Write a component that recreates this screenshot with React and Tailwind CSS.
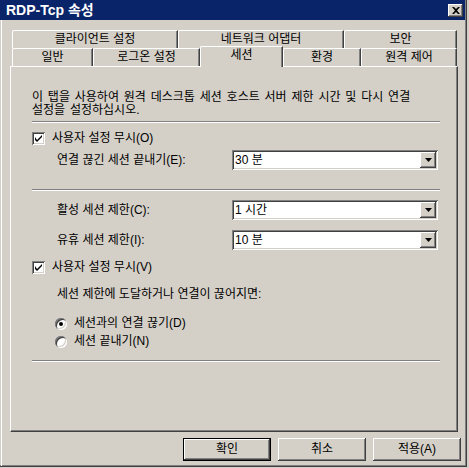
import React from "react";

const raised =
  "shadow-[inset_-1px_-1px_#404040,inset_1px_1px_#ffffff,inset_-2px_-2px_#808080]";
const sunken =
  "shadow-[inset_1px_1px_#808080,inset_-1px_-1px_#ffffff,inset_2px_2px_#404040,inset_-2px_-2px_#d4d0c8]";

function Tab({ label, width, selected }) {
  return (
    <div
      style={{ width }}
      className={`flex items-center justify-center border-t border-l border-white rounded-tl-[2px] shadow-[inset_-1px_0_#808080] border-r border-r-[#404040] bg-[#d4d0c8] ${
        selected ? "h-[21px] -mb-[1px] relative z-10 pb-[3px]" : "h-[18px]"
      }`}
    >
      <span className="leading-[13px] text-[12px]">{label}</span>
    </div>
  );
}

function Separator({ className = "" }) {
  return (
    <div className={`w-[408px] h-[2px] border-t border-[#808080] border-b border-b-white ${className}`} />
  );
}

function Combo({ value, className = "" }) {
  return (
    <div className={`w-[206px] h-[20px] bg-white flex items-center p-[2px] ${sunken} ${className}`}>
      <span className="flex-1 pl-[1px] leading-[13px] text-[12px]">{value}</span>
      <div className={`w-[16px] h-[16px] bg-[#d4d0c8] flex items-center justify-center ${raised}`}>
        <svg width="7" height="4" viewBox="0 0 7 4">
          <path d="M0 0H7L3.5 4Z" fill="#000" />
        </svg>
      </div>
    </div>
  );
}

function Checkbox({ label, className = "" }) {
  return (
    <div className={`flex items-center h-[13px] ${className}`}>
      <div className={`w-[13px] h-[13px] bg-white flex items-center justify-center ${sunken}`}>
        <svg width="7" height="7" viewBox="0 0 7 7">
          <path d="M0 2v3l2 2 5-5V0L2 5Z" fill="#000" />
        </svg>
      </div>
      <span className="ml-[7px] leading-[13px] text-[12px]">{label}</span>
    </div>
  );
}

function Radio({ label, checked, className = "" }) {
  return (
    <div className={`flex items-center h-[13px] ${className}`}>
      <div className={`w-[12px] h-[12px] rounded-full bg-white flex items-center justify-center ${sunken}`}>
        {checked && <div className="w-[4px] h-[4px] rounded-full bg-black" />}
      </div>
      <span className="ml-[7px] leading-[13px] text-[12px]">{label}</span>
    </div>
  );
}

function Button({ label, isDefault }) {
  return (
    <button
      className={`w-[88px] h-[23px] bg-[#d4d0c8] flex items-center justify-center text-[12px] leading-[13px] ${
        isDefault
          ? "border border-black shadow-[inset_-1px_-1px_#404040,inset_1px_1px_#ffffff,inset_-2px_-2px_#808080]"
          : raised
      }`}
    >
      {label}
    </button>
  );
}

export default function App() {
  return (
    <div className="w-[469px] h-[468px] bg-[#d4d0c8] overflow-hidden text-black font-['Liberation_Sans','Noto_Sans_CJK_KR',sans-serif]">
      <div className="w-[467px] h-[467px] flex flex-col border-r border-b border-[#404040] shadow-[inset_-1px_-1px_#808080]">
        {/* Title bar */}
        <div className="h-[20px] w-[465px] shrink-0 bg-[#0a246a] flex items-center justify-between pl-[6px] pr-[2px]">
          <span className="text-white font-bold text-[14px] leading-[15px]">RDP-Tcp 속성</span>
          <div className={`w-[15px] h-[13px] bg-[#d4d0c8] flex items-center justify-center ${raised}`}>
            <svg width="8" height="7" viewBox="0 0 8 7">
              <path d="M0 0h2l2 2 2-2h2L5 3.5 8 7H6L4 5 2 7H0l3-3.5Z" fill="#000" />
            </svg>
          </div>
        </div>

        <div className="flex-1 flex flex-col ml-[1px] border-l border-white">
          {/* Tabs */}
          <div className="mt-[10px] ml-[10px] flex">
            <Tab label="클라이언트 설정" width={166} />
            <Tab label="네트워크 어댑터" width={166} />
            <Tab label="보안" width={113} />
          </div>
          <div className="ml-[10px] flex items-end h-[18px]">
            <Tab label="일반" width={81} />
            <Tab label="로그온 설정" width={107} />
            <Tab label="세션" width={83} selected />
            <Tab label="환경" width={78} />
            <Tab label="원격 제어" width={96} />
          </div>

          {/* Panel */}
          <div className="ml-[8px] w-[448px] h-[366px] border-t border-l border-white border-r border-b border-r-[#404040] border-b-[#404040] shadow-[inset_-1px_-1px_#808080] pl-[21px] flex flex-col">
            <p className="mt-[24px] leading-[13px] text-[12px] [word-spacing:1.5px]">
              이 탭을 사용하여 원격 데스크톱 세션 호스트 서버 제한 시간 및 다시 연결
              <br />
              설정을 설정하십시오.
            </p>
            <Separator className="mt-[4px]" />
            <Checkbox label="사용자 설정 무시(O)" className="mt-[9px]" />
            <div className="mt-[5px] flex items-center">
              <span className="ml-[25px] w-[175px] text-[12px] leading-[13px]">연결 끊긴 세션 끝내기(E):</span>
              <Combo value="30 분" />
            </div>
            <Separator className="mt-[19px]" />
            <div className="mt-[9px] flex items-center">
              <span className="ml-[25px] w-[175px] text-[12px] leading-[13px]">활성 세션 제한(C):</span>
              <Combo value="1 시간" />
            </div>
            <div className="mt-[10px] flex items-center">
              <span className="ml-[25px] w-[175px] text-[12px] leading-[13px]">유휴 세션 제한(I):</span>
              <Combo value="10 분" />
            </div>
            <Checkbox label="사용자 설정 무시(V)" className="mt-[11px]" />
            <p className="mt-[14px] ml-[25px] text-[12px] leading-[13px]">
              세션 제한에 도달하거나 연결이 끊어지면:
            </p>
            <Radio label="세션과의 연결 끊기(D)" checked className="mt-[16px] ml-[23px]" />
            <Radio label="세션 끝내기(N)" className="mt-[5px] ml-[23px]" />
            <Separator className="mt-[12px]" />
          </div>

          {/* Buttons */}
          <div className="mt-[6px] ml-[181px] flex gap-[7px]">
            <Button label="확인" isDefault />
            <Button label="취소" />
            <Button label="적용(A)" />
          </div>
        </div>
      </div>
    </div>
  );
}
